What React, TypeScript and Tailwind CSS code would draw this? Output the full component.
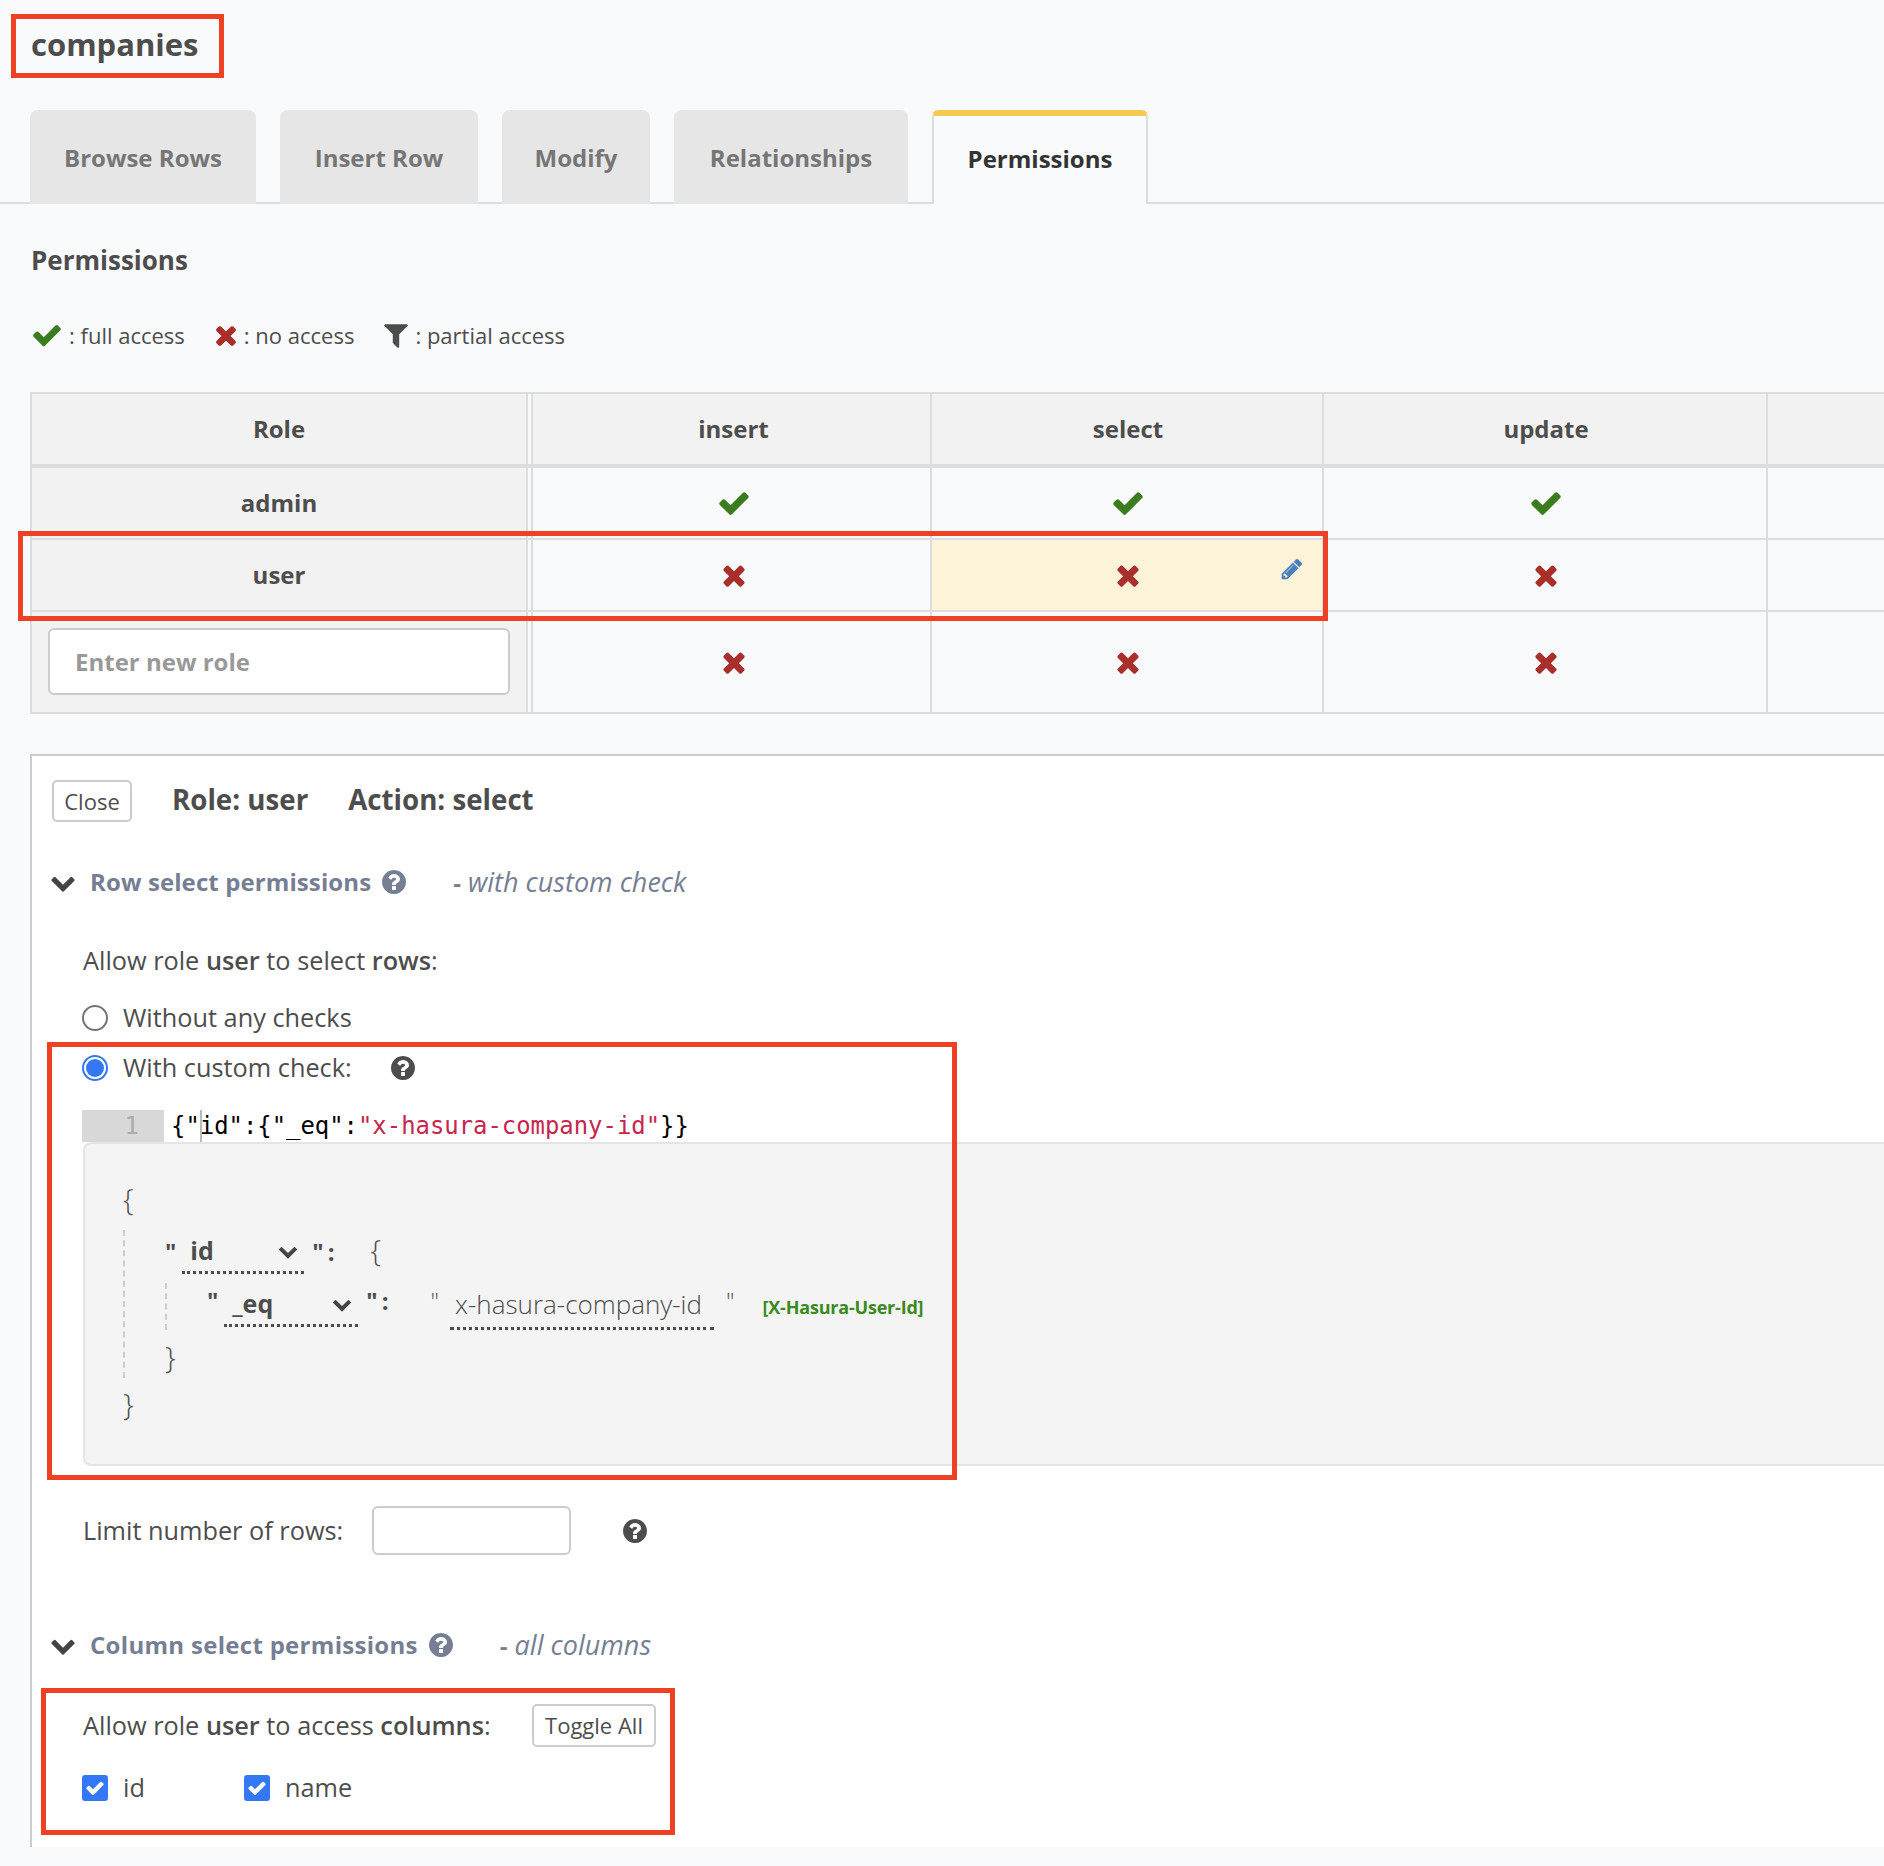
const CHECK = "M1671 566q0 40-28 68l-724 724-136 136q-28 28-68 28t-68-28l-136-136-362-362q-28-28-28-68t28-68l136-136q28-28 68-28t68 28l294 295 656-657q28-28 68-28t68 28l136 136q28 28 28 68z";
const TIMES = "M1490 1322q0 40-28 68l-136 136q-28 28-68 28t-68-28l-294-294-294 294q-28 28-68 28t-68-28l-136-136q-28-28-28-68t28-68l294-294-294-294q-28-28-28-68t28-68l136-136q28-28 68-28t68 28l294 294 294-294q28-28 68-28t68 28l136 136q28 28 28 68t-28 68l-294 294 294 294q28 28 28 68z";
const FILTER = "M1595 295q17 41-14 70l-493 493v742q0 42-39 59-13 5-25 5-27 0-45-19l-256-256q-19-19-19-45v-486l-493-493q-31-29-14-70 17-39 59-39h1280q42 0 59 39z";
const PENCIL = "M491 1536l91-91-235-235-91 91v107h128v128h107zm523-928q0-22-22-22-10 0-17 7l-542 542q-7 7-7 17 0 22 22 22 10 0 17-7l542-542q7-7 7-17zm-54-192l416 416-832 832h-416v-416zm683 96q0 53-37 90l-166 166-416-416 166-165q36-38 90-38 53 0 91 38l235 234q37 39 37 91z";
const HELP = "M1024 1376v-192q0-14-9-23t-23-9h-192q-14 0-23 9t-9 23v192q0 14 9 23t23 9h192q14 0 23-9t9-23zm256-672q0-88-55.5-163t-138.5-116-170-41q-243 0-371 213-15 24 8 42l132 100q7 6 19 6 16 0 25-12 53-68 86-92 34-24 86-24 48 0 85.5 26t37.5 59q0 38-20 61t-68 45q-63 28-115.5 86.5t-52.5 125.5v36q0 14 9 23t23 9h192q14 0 23-9t9-23q0-19 21.5-49.5t54.5-49.5q32-18 49-28.5t46-35 44.5-48 28-60.5 12.5-81zm384 192q0 209-103 385.5t-279.5 279.5-385.5 103-385.5-103-279.5-279.5-103-385.5 103-385.5 279.5-279.5 385.5-103 385.5 103 279.5 279.5 103 385.5z";
const CHEVRON = "M1683 808l-742 741q-19 19-45 19t-45-19l-742-741q-19-19-19-45.5t19-45.5l166-165q19-19 45-19t45 19l531 531 531-531q19-19 45-19t45 19l166 165q19 19 19 45.5t-19 45.5z";

function Fa({ d, className }: { d: string; className: string }) {
  return (
    <svg viewBox="0 0 1792 1792" className={className} fill="currentColor">
      <path d={d} />
    </svg>
  );
}

const Yes = () => <Fa d={CHECK} className="w-[34px] h-[34px] text-[#3a7d1e]" />;
const No = () => <Fa d={TIMES} className="w-[32px] h-[32px] text-[#a9302a]" />;

const tabs = ["Browse Rows", "Insert Row", "Modify", "Relationships"];
const tabWidths = ["w-[226px]", "w-[198px]", "w-[148px]", "w-[234px]"];

function SectionTitle({ title, note, spacing }: { title: string; note: string; spacing: string }) {
  return (
    <div className="flex items-center h-[40px]">
      <Fa d={CHEVRON} className="-ml-[2px] w-[26px] h-[26px] text-[#444]" />
      <span className={`ml-[14px] text-[24px] font-bold text-[#767e93] ${spacing}`}>{title}</span>
      <Fa d={HELP} className="ml-[9px] w-[28px] h-[28px] text-[#767e93]" />
      <span className="ml-[45px] text-[27px] text-[#767e93]">
        <b className="font-bold text-[24px]">-</b> <i>{note}</i>
      </span>
    </div>
  );
}

function Radio({ on, label }: { on?: boolean; label: string }) {
  return (
    <div className="flex items-center h-[40px] -ml-[1px]">
      {on ? (
        <span className="w-[26px] h-[26px] rounded-full border-2 border-[#3478f6] bg-white flex items-center justify-center">
          <span className="w-[18px] h-[18px] rounded-full bg-[#3478f6]" />
        </span>
      ) : (
        <span className="w-[26px] h-[26px] rounded-full border-2 border-[#767676] bg-white" />
      )}
      <span className="ml-[15px] text-[25.3px]">{label}</span>
    </div>
  );
}

function Check({ label, width }: { label: string; width: string }) {
  return (
    <div className={`flex items-center h-[26px] ${width}`}>
      <span className="w-[26px] h-[26px] rounded-[3px] bg-[#3478f6] flex items-center justify-center">
        <Fa d={CHECK} className="w-[20px] h-[20px] text-white" />
      </span>
      <span className="ml-[15px] text-[25.3px]">{label}</span>
    </div>
  );
}

function Op({ label, width }: { label: string; width: string }) {
  return (
    <div className={`${width} flex items-center justify-between h-[44px] border-b-[3px] border-dotted border-[#4d4d4d] pl-[8px] pr-[6px]`}>
      <span className="text-[25px] font-bold">{label}</span>
      <Fa d={CHEVRON} className="w-[20px] h-[20px] text-[#444]" />
    </div>
  );
}

const mark = "absolute border-[5px] border-[#ee4124] pointer-events-none";

export default function App() {
  return (
    <div className="relative w-[1884px] h-[1866px] overflow-hidden bg-[#f9fafc] text-[#4d4d4d] font-['Open_Sans',sans-serif]">
      {/* Title */}
      <div className="h-[110px] pl-[31px] pt-[19px] text-[31px] font-bold leading-[50px]">companies</div>

      {/* Tabs */}
      <div className="flex h-[94px] border-b-2 border-[#ddd] pl-[30px] gap-[24px]">
        {tabs.map((t, i) => (
          <div
            key={t}
            className={`${tabWidths[i]} h-[94px] pt-[2px] rounded-t-[8px] bg-[#e6e6e6] flex items-center justify-center text-[24px] font-bold text-[#767676]`}
          >
            {t}
          </div>
        ))}
        <div className="w-[216px] h-[94px] pb-[2px] rounded-t-[6px] border-t-[6px] border-x-2 border-t-[#f8c94f] border-x-[#ddd] bg-[#f9fafc] flex items-center justify-center text-[24px] font-bold text-[#333]">
          Permissions
        </div>
      </div>

      {/* Heading and legend */}
      <div className="pl-[31px] pt-[38px] h-[84px] text-[26px] font-bold leading-[36px]">Permissions</div>
      <div className="pl-[31px] flex items-center h-[44px] mt-[25px] text-[22px]">
        <Fa d={CHECK} className="w-[32px] h-[32px] text-[#3a7d1e]" />
        <span className="ml-[6px]">: full access</span>
        <Fa d={TIMES} className="ml-[26px] w-[30px] h-[30px] text-[#a9302a]" />
        <span className="ml-[3px]">: no access</span>
        <Fa d={FILTER} className="ml-[27px] w-[30px] h-[30px] text-[#4d4d4d]" />
        <span className="ml-[4px]">: partial access</span>
      </div>

      {/* Permissions table */}
      <div className="ml-[30px] mt-[35px] border-l-2 border-t-2 border-b-2 border-[#ddd] w-[1854px]">
        <div className="flex h-[74px] border-b-4 border-[#ddd] text-[24px] font-bold">
          <div className="w-[496px] bg-[#f2f2f2] border-r-2 border-[#ddd] flex items-center justify-center">Role</div>
          <div className="ml-[3px] w-[401px] pl-[4px] bg-[#f2f2f2] border-x-2 border-[#ddd] flex items-center justify-center">insert</div>
          <div className="w-[390px] pl-[2px] bg-[#f2f2f2] flex items-center justify-center">select</div>
          <div className="w-[446px] pl-[2px] bg-[#f2f2f2] border-x-2 border-[#ddd] flex items-center justify-center">update</div>
          <div className="flex-1 bg-[#f2f2f2]" />
        </div>
        <div className="flex h-[72px] border-b-2 border-[#ddd]">
          <div className="w-[496px] bg-[#f2f2f2] border-r-2 border-[#ddd] flex items-center justify-center text-[24px] font-bold">admin</div>
          <div className="ml-[3px] w-[401px] pl-[4px] border-x-2 border-[#ddd] flex items-center justify-center"><Yes /></div>
          <div className="w-[390px] pl-[2px] flex items-center justify-center"><Yes /></div>
          <div className="w-[446px] pl-[2px] border-x-2 border-[#ddd] flex items-center justify-center"><Yes /></div>
        </div>
        <div className="flex h-[72px] border-b-2 border-[#ddd]">
          <div className="w-[496px] bg-[#f2f2f2] border-r-2 border-[#ddd] flex items-center justify-center text-[24px] font-bold">user</div>
          <div className="ml-[3px] w-[401px] pl-[4px] border-x-2 border-[#ddd] flex items-center justify-center"><No /></div>
          <div className="relative w-[390px] pl-[2px] bg-[#fdf3d9] flex items-center justify-center">
            <No />
            <Fa d={PENCIL} className="absolute right-[18px] top-[17px] w-[24px] h-[24px] text-[#4a80bd]" />
          </div>
          <div className="w-[446px] pl-[2px] border-x-2 border-[#ddd] flex items-center justify-center"><No /></div>
        </div>
        <div className="flex h-[100px]">
          <div className="w-[496px] bg-[#f2f2f2] border-r-2 border-[#ddd] flex items-center justify-center">
            <div className="w-[462px] h-[67px] mb-[2px] rounded-[6px] border-2 border-[#ccc] bg-white pl-[25px] pt-[2px] flex items-center text-[24px] font-bold text-[#999]">
              Enter new role
            </div>
          </div>
          <div className="ml-[3px] w-[401px] pl-[4px] border-x-2 border-[#ddd] flex items-center justify-center"><No /></div>
          <div className="w-[390px] pl-[2px] flex items-center justify-center"><No /></div>
          <div className="w-[446px] pl-[2px] border-x-2 border-[#ddd] flex items-center justify-center"><No /></div>
        </div>
      </div>

      {/* Edit panel */}
      <div className="ml-[30px] mt-[40px] w-[1854px] border-l-2 border-t-2 border-[#ccc] bg-white pl-[20px] pb-[46px]">
        <div className="mt-[24px] flex items-center h-[42px]">
          <div className="w-[80px] h-[42px] rounded-[5px] border-2 border-[#ccc] flex items-center justify-center text-[22px]">Close</div>
          <span className="ml-[40px] -mt-[2px] text-[27.7px] font-bold">Role: user</span>
          <span className="ml-[40px] -mt-[2px] text-[27.7px] font-bold">Action: select</span>
        </div>

        <div className="mt-[40px]">
          <SectionTitle title="Row select permissions" note="with custom check" spacing="tracking-[0.1px]" />
        </div>

        <div className="ml-[31px]">
          <div className="mt-[39px] h-[40px] flex items-center text-[25.3px] whitespace-pre">
            Allow role <b className="font-semibold">user</b> to select <b className="font-semibold">rows</b>:
          </div>
          <div className="mt-[17px]"><Radio label="Without any checks" /></div>
          <div className="mt-[10px] flex items-center">
            <Radio on label="With custom check:" />
            <Fa d={HELP} className="ml-[37px] w-[28px] h-[28px] text-[#4d4d4d]" />
          </div>

          {/* Code editor */}
          <div className="mt-[22px] flex items-center h-[32px] -ml-[1px] text-[23.9px] font-['DejaVu_Sans_Mono',monospace] text-black">
            <div className="w-[82px] h-[32px] bg-[#d8d8d8] text-[#aaa] text-right pr-[25px] leading-[32px]">1</div>
            <div className="ml-[7px] relative leading-[32px] whitespace-pre">
              {'{"id":{"_eq":'}<span className="text-[#c7254e]">"x-hasura-company-id"</span>{"}}"}
              <span className="absolute left-[29px] top-0 w-[2px] h-[32px] bg-[#bbb]" />
            </div>
          </div>

          {/* Condition builder */}
          <div className="h-[324px] rounded-l-[8px] border-2 border-r-0 border-[#e5e5e5] bg-[#f4f4f4] pl-[38px] pt-[34px] text-[24px]">
            <div className="h-[40px] flex items-center font-light text-[30px]">{"{"}</div>
            <div className="mt-[12px] h-[148px] border-l-2 border-dashed border-[#ccc] pl-[40px]">
              <div className="flex items-start h-[50px]">
                <span className="font-bold mt-[4px]">"</span>
                <div className="ml-[6px]"><Op label="id" width="w-[122px]" /></div>
                <span className="ml-[8px] font-bold mt-[4px] tracking-[4px]">":</span>
                <span className="ml-[32px] font-light text-[30px] mt-[-3px]">{"{"}</span>
              </div>
              <div className="mt-[3px] h-[47px] border-l-2 border-dashed border-[#ccc] pl-[40px] flex items-start">
                <span className="font-bold">"</span>
                <div className="ml-[6px]"><Op label="_eq" width="w-[134px]" /></div>
                <span className="ml-[8px] font-bold tracking-[4px]">":</span>
                <span className="ml-[38px] font-light">"</span>
                <div className="ml-[11px] w-[264px] h-[47px] border-b-[3px] border-dotted border-[#4d4d4d] pl-[5px] pt-[2px] font-light text-[26px] leading-[38px]">x-hasura-company-id</div>
                <span className="ml-[12px] font-light">"</span>
                <span className="ml-[28px] mt-[11px] text-[18px] font-bold text-[#3a8a1e] tracking-[-0.2px]">[X-Hasura-User-Id]</span>
              </div>
              <div className="mt-[6px] h-[40px] flex items-center font-light text-[30px]">{"}"}</div>
            </div>
            <div className="mt-[5px] h-[40px] flex items-center font-light text-[30px]">{"}"}</div>
          </div>

          <div className="mt-[40px] flex items-center h-[49px] text-[25.3px]">
            <span className="w-[289px]">Limit number of rows:</span>
            <div className="w-[199px] h-[49px] rounded-[6px] border-2 border-[#ccc] bg-white" />
            <Fa d={HELP} className="ml-[50px] w-[28px] h-[28px] text-[#4d4d4d]" />
          </div>
        </div>

        <div className="mt-[70px]">
          <SectionTitle title="Column select permissions" note="all columns" spacing="tracking-[0.3px]" />
        </div>

        <div className="ml-[31px]">
          <div className="mt-[39px] flex items-center h-[43px] text-[25.3px] whitespace-pre">
            <span className="w-[449px]">
              Allow role <b className="font-semibold">user</b> to access <b className="font-semibold">columns</b>:
            </span>
            <div className="w-[124px] h-[43px] rounded-[5px] border-2 border-[#ccc] flex items-center justify-center text-[22px]">Toggle All</div>
          </div>
          <div className="mt-[28px] flex -ml-[1px]">
            <Check label="id" width="w-[162px]" />
            <Check label="name" width="w-[120px]" />
          </div>
        </div>
      </div>

      {/* Annotation boxes */}
      <div className={`${mark} left-[11px] top-[14px] w-[213px] h-[64px]`} />
      <div className={`${mark} left-[18px] top-[531px] w-[1310px] h-[90px]`} />
      <div className={`${mark} left-[47px] top-[1042px] w-[910px] h-[438px]`} />
      <div className={`${mark} left-[41px] top-[1688px] w-[634px] h-[147px]`} />
    </div>
  );
}
